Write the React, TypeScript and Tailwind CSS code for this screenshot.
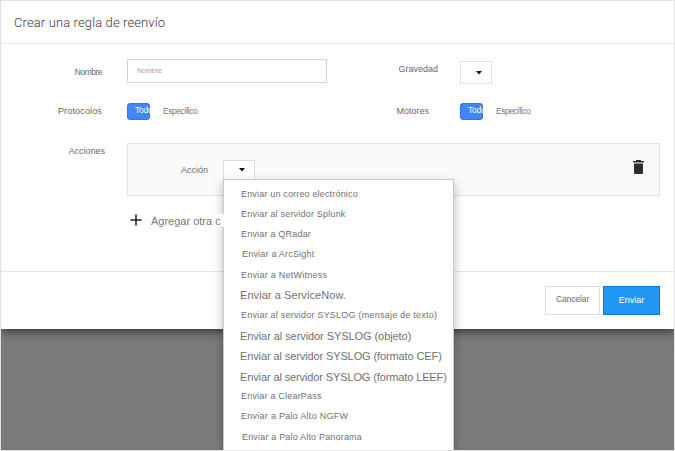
import React from "react";

const options = [
  { label: "Enviar un correo electrónico", style: "pl-[17px] text-[9px] tracking-[0.17px]", h: "h-5" },
  { label: "Enviar al servidor Splunk", style: "pl-[17px] text-[9px] tracking-[0.2px]", h: "h-5" },
  { label: "Enviar a QRadar", style: "pl-[17px] text-[9px] tracking-[0.2px]", h: "h-5" },
  { label: "Enviar a ArcSight", style: "pl-[18px] text-[9px] tracking-[0.2px]", h: "h-5" },
  { label: "Enviar a NetWitness", style: "pl-[17px] text-[9px] tracking-[0.25px]", h: "h-[21px]" },
  { label: "Enviar a ServiceNow.", style: "pl-4 pb-[2px] text-[11px] tracking-[0.07px]", h: "h-5" },
  { label: "Enviar al servidor SYSLOG (mensaje de texto)", style: "pl-[17px] text-[9px] tracking-[0.23px]", h: "h-5" },
  { label: "Enviar al servidor SYSLOG (objeto)", style: "pl-4 text-[11px] tracking-[-0.07px]", h: "h-[21px]" },
  { label: "Enviar al servidor SYSLOG (formato CEF)", style: "pl-4 pb-[2px] text-[11px] tracking-[-0.11px]", h: "h-5" },
  { label: "Enviar al servidor SYSLOG (formato LEEF)", style: "pl-4 text-[11px] tracking-[-0.12px]", h: "h-[21px]" },
  { label: "Enviar a ClearPass", style: "pl-[17px] text-[9px] tracking-[0.2px]", h: "h-[18px]" },
  { label: "Enviar a Palo Alto NGFW", style: "pl-[17px] text-[9px] tracking-[0.27px]", h: "h-[22px]" },
  { label: "Enviar a Palo Alto Panorama", style: "pl-[18px] text-[9px] tracking-[0.18px]", h: "h-5" },
];

function Caret() {
  return (
    <svg width="6" height="4" viewBox="0 0 6 4" className="block">
      <path d="M0 0h6L3 3.5z" fill="#111" />
    </svg>
  );
}

function Toggle() {
  return (
    <div className="flex items-center">
      <div className="h-[17px] w-[23px] overflow-hidden rounded-[4px] bg-[#4285f4] pl-[8px] text-[8.5px] leading-[15px] tracking-[-0.2px] whitespace-nowrap text-white shadow-[inset_0_0_0_1px_#2f74ea]">
        Todo
      </div>
      <span className="ml-[13px] text-[8.5px] leading-[17px] tracking-[-0.5px] text-[#77777c]">Específico</span>
    </div>
  );
}

function ActionMenu() {
  return (
    <div className="absolute top-[19px] left-0 z-10 h-[272px] w-[231px] border border-b-0 border-[#c9c9c9] bg-white pt-[5px] shadow-[0_4px_10px_rgba(0,0,0,0.28)]">
      {options.map((o) => (
        <div key={o.label} className={`flex items-center whitespace-nowrap text-[#707074] ${o.h} ${o.style}`}>
          {o.label}
        </div>
      ))}
    </div>
  );
}

export default function App() {
  return (
    <div className="h-[451px] w-[675px] overflow-hidden border border-[#e1e1e1] bg-[#7b7b7b] font-['Liberation_Sans',Arial,sans-serif] text-[#68686c]">
      <div className="flex h-[328px] flex-col bg-white shadow-[0_2px_10px_rgba(0,0,0,0.65)]">
        <header className="flex h-[43px] shrink-0 items-center border-b border-[#ebebeb] pl-[13px] pt-px font-['Roboto',sans-serif] text-[13px] font-light tracking-[0.12px] text-[#3c3c3f]">
          Crear una regla de reenvío
        </header>

        <div className="h-[227px] shrink-0">
          <div className="flex pt-[15px]">
            <label className="w-[101px] pt-[7px] text-right text-[8.5px] leading-3 tracking-[-0.5px]">Nombre</label>
            <div className="ml-[25px] flex h-6 w-[200px] items-center border border-[#d3d3d3] pl-[9px] text-[7px] text-[#a5a5a9]">
              Nombre
            </div>
            <label className="w-[111px] pt-[4px] text-right text-[9px] leading-3">Gravedad</label>
            <div className="mt-[2px] ml-[22px] flex h-[23px] w-8 items-center border border-[#e0e0e0] pl-[15px]">
              <Caret />
            </div>
          </div>

          <div className="mt-[19px] flex h-[17px] items-center">
            <label className="w-[101px] text-right text-[9px] tracking-[0.15px]">Protocolos</label>
            <div className="ml-[25px] w-[200px]">
              <Toggle />
            </div>
            <label className="w-[102px] text-right text-[9px]">Motores</label>
            <div className="ml-[31px]">
              <Toggle />
            </div>
          </div>

          <div className="mt-[23px] flex">
            <label className="w-[104px] pt-[2px] text-right text-[9px] leading-3">Acciones</label>
            <div className="ml-[22px] flex h-[53px] w-[533px] border border-[#e4e4e4] bg-[#fafafa]">
              <label className="w-[80px] pt-[20px] text-right text-[9px] leading-3">Acción</label>
              <div className="relative mt-[16px] ml-[15px] h-5 w-8">
                <div className="flex h-5 items-center border border-[#dcdcdc] bg-white pl-[15px]">
                  <Caret />
                </div>
                <ActionMenu />
              </div>
              <svg width="11" height="14" viewBox="0 0 11 14" className="mt-[16px] ml-auto mr-[15px]" fill="#2c2c30">
                <path d="M3 0h5v1h3v1.6H0V1h3zM1 3.6h9V13q0 1-1 1H2q-1 0-1-1z" />
              </svg>
            </div>
          </div>

          <div className="relative z-20 mt-[18px] ml-[129px] flex h-[13px] w-[94px] items-start bg-white text-[11px] whitespace-nowrap text-[#77777a]">
            <svg width="12" height="12" viewBox="0 0 12 12" className="shrink-0" fill="#25252a">
              <path d="M5.2 0.5h1.6v4.7H11.5v1.6H6.8v4.7H5.2V6.8H.5V5.2h4.7z" />
            </svg>
            <span className="ml-[9px] leading-[14px]">Agregar otra c</span>
          </div>
        </div>

        <footer className="flex h-[58px] shrink-0 justify-end gap-[3px] border-t border-[#e5e5e5] pt-[14px] pr-[14px]">
          <button className="h-[29px] w-[55px] border border-[#dedede] bg-white pb-[2px] text-[8.5px] tracking-[-0.1px]">Cancelar</button>
          <button className="h-[29px] w-[57px] border border-[#0d76da] bg-[#2196f3] text-[9px] text-white">Enviar</button>
        </footer>
      </div>
    </div>
  );
}
